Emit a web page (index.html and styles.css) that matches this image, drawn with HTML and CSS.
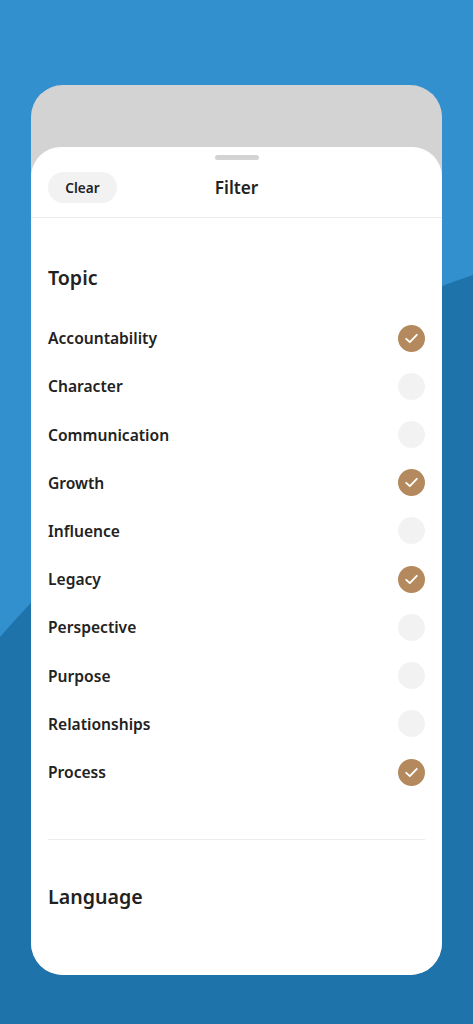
FILE: index.html
```html
<!DOCTYPE html>
<html lang="en">
<head>
<meta charset="utf-8">
<title>Filter</title>
<link rel="stylesheet" href="styles.css">
</head>
<body>
<svg class="bg" width="473" height="1024" viewBox="0 0 473 1024" aria-hidden="true">
  <rect width="473" height="1024" fill="#3390cf"/>
  <path d="M0 637 C150 467 323 323 473 275 L473 1024 L0 1024 Z" fill="#1f73ab"/>
</svg>
<div class="stage">
  <div class="phone">
    <div class="sheet">
      <div class="handle"></div>
      <header class="head">
        <div class="head-left"><button class="clear">Clear</button></div>
        <h1 class="title">Filter</h1>
        <div class="head-right"></div>
      </header>
      <section class="content">
        <h2 class="section-title">Topic</h2>
        <ul class="list">
          <li class="row"><span>Accountability</span><span class="box on"><svg viewBox="0 0 27 27"><path d="M8.2 13.8 L11.8 17.2 L18.8 9.8"/></svg></span></li>
          <li class="row"><span>Character</span><span class="box"></span></li>
          <li class="row"><span>Communication</span><span class="box"></span></li>
          <li class="row"><span>Growth</span><span class="box on"><svg viewBox="0 0 27 27"><path d="M8.2 13.8 L11.8 17.2 L18.8 9.8"/></svg></span></li>
          <li class="row"><span>Influence</span><span class="box"></span></li>
          <li class="row"><span>Legacy</span><span class="box on"><svg viewBox="0 0 27 27"><path d="M8.2 13.8 L11.8 17.2 L18.8 9.8"/></svg></span></li>
          <li class="row"><span>Perspective</span><span class="box"></span></li>
          <li class="row"><span>Purpose</span><span class="box"></span></li>
          <li class="row"><span>Relationships</span><span class="box"></span></li>
          <li class="row"><span>Process</span><span class="box on"><svg viewBox="0 0 27 27"><path d="M8.2 13.8 L11.8 17.2 L18.8 9.8"/></svg></span></li>
        </ul>
        <hr class="divider">
        <h2 class="section-title lang">Language</h2>
      </section>
    </div>
  </div>
</div>
</body>
</html>
```

FILE: styles.css
```css
* { box-sizing: border-box; }
html, body {
  margin: 0;
  padding: 0;
  width: 473px;
  height: 1024px;
  overflow: hidden;
  font-family: "Noto Sans", "Open Sans", "DejaVu Sans", sans-serif;
  color: #222;
}
body { position: relative; background: #3390cf; }
.bg { position: absolute; left: 0; top: 0; display: block; }
.stage {
  position: relative;
  padding: 85px 0 0 31px;
}
.phone {
  width: 411px;
  height: 890px;
  border-radius: 32px;
  background: #d3d3d3;
  overflow: hidden;
  display: flex;
  flex-direction: column;
  padding-top: 62px;
}
.sheet {
  flex: 1;
  background: #fff;
  border-radius: 30px 30px 0 0;
  display: flex;
  flex-direction: column;
}
.handle {
  width: 44px;
  height: 5px;
  border-radius: 3px;
  background: #d3d3d3;
  margin: 8px auto 0;
}
.head {
  height: 58px;
  display: grid;
  grid-template-columns: 1fr auto 1fr;
  align-items: center;
  padding: 0 17px;
  border-bottom: 1px solid #ececec;
}
.clear {
  border: 0;
  background: #f2f2f2;
  border-radius: 16px;
  width: 69px;
  height: 31px;
  font-family: inherit;
  font-size: 13.6px;
  font-weight: 600;
  color: #222;
  padding: 0;
  margin-top: -2px;
}
.title {
  margin: -2px 0 0;
  font-size: 17.2px;
  font-weight: 600;
  line-height: 24px;
}
.content {
  padding: 0 17px;
}
.section-title {
  margin: 46px 0 0;
  font-size: 19.6px;
  line-height: 28px;
  font-weight: 600;
}
.list {
  list-style: none;
  margin: 22px 0 0;
  padding: 0;
}
.row {
  height: 48.22px;
  display: flex;
  align-items: center;
  justify-content: space-between;
  font-size: 15.6px;
  font-weight: 600;
}
.box {
  width: 27px;
  height: 27px;
  border-radius: 50%;
  background: #f2f2f2;
  display: flex;
}
.box.on { background: #b4895d; }
.box svg { width: 27px; height: 27px; }
.box path {
  fill: none;
  stroke: #fff;
  stroke-width: 1.8;
  stroke-linecap: round;
  stroke-linejoin: round;
}
.divider {
  margin: 43px 0 0;
  border: 0;
  height: 1px;
  background: #ececec;
}
.section-title.lang { margin-top: 43px; }
```
